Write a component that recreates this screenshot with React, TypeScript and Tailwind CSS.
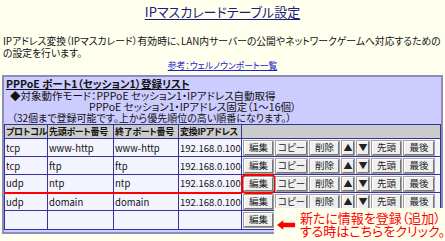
import React from "react";

const rows = [
  { proto: "tcp", start: "www-http", end: "www-http", ip: "192.168.0.100" },
  { proto: "tcp", start: "ftp", end: "ftp", ip: "192.168.0.100" },
  { proto: "udp", start: "ntp", end: "ntp", ip: "192.168.0.100", mark: true },
  { proto: "udp", start: "domain", end: "domain", ip: "192.168.0.100" },
];

function Btn({ children, className = "" }: { children: React.ReactNode; className?: string }) {
  return (
    <button
      className={
        "h-[14px] shrink-0 flex items-center justify-center bg-[#efefef] border border-t-[#ffffff] border-l-[#ffffff] border-r-[#777777] border-b-[#777777] outline outline-1 outline-[#a0a0a0] text-[9.5px] leading-none text-[#222] " +
        className
      }
    >
      {children}
    </button>
  );
}

const cell = "border border-[#333399] px-[1px] py-0 leading-[12px] whitespace-nowrap overflow-hidden";
const head = "border border-[#333399] px-[1px] py-0 leading-[12px] whitespace-nowrap overflow-hidden text-[9px] tracking-[-0.3px]";
const red = "border-b-2 border-b-[#ff0000]";

export default function App() {
  return (
    <div className="relative w-[445px] h-[241px] overflow-hidden bg-[#ffffee] text-[#111] font-['Noto_Sans_CJK_JP',sans-serif] [font-feature-settings:'palt']">
      <h1 className="h-[21px] pt-[4px] text-center text-[13px] leading-[16px] text-[#1a1a80]">
        <span className="underline underline-offset-2">IPマスカレードテーブル設定</span>
      </h1>

      <div className="mt-[14px] h-[24px] px-[3px] text-[9.8px] leading-[12px] whitespace-nowrap">
        <div className="h-[12px]">IPアドレス変換（IPマスカレード）有効時に、LAN内サーバーの公開やネットワークゲームへ対応するための</div>
        <div className="h-[12px]">の設定を行います。</div>
      </div>

      <div className="mt-[1px] h-[12px] text-center text-[8.8px] leading-[12px]">
        <a className="text-[#2222cc] underline">参考：ウェルノウンポート一覧</a>
      </div>

      <div className="mt-[3px] mx-[2px] border-2 border-[#8c8cbc] bg-[#ccccff] pb-[2px]">
        <div className="h-[13px] pt-[1px] pl-[2px] text-[10.5px] leading-[12px] font-bold whitespace-nowrap">
          <span className="underline">PPPoE ポート1（セッション1）登録リスト</span>
        </div>
        <div className="text-[10.5px] leading-[11px] whitespace-nowrap">
          <div className="h-[11px] pl-[6px]">◆対象動作モード：PPPoE セッション1・IPアドレス自動取得</div>
          <div className="h-[11px] pl-[85px]">PPPoE セッション1・IPアドレス固定（1～16個）</div>
          <div className="h-[11px] pl-[8px] text-[10px]">（32個まで登録可能です。上から優先順位の高い順番になります。）</div>
        </div>

        <table className="mt-[1px] w-full table-fixed border-collapse border border-[#333399] text-[9.5px]">
          <colgroup>
            <col className="w-[43px]" />
            <col className="w-[66px]" />
            <col className="w-[65px]" />
            <col className="w-[63px]" />
            <col />
          </colgroup>
          <thead>
            <tr className="h-[14px] bg-[#cccccc] font-bold text-left">
              <th className={head}>プロトコル</th>
              <th className={head}>先頭ポート番号</th>
              <th className={head}>終了ポート番号</th>
              <th className={head}>変換IPアドレス</th>
              <th className="border border-[#333399] p-0"></th>
            </tr>
          </thead>
          <tbody className="bg-[#f4f4ff]">
            {rows.map((r, i) => (
              <tr key={i} className="h-[18px]">
                <td className={cell + (r.mark ? " " + red : "")}>{r.proto}</td>
                <td className={cell + (r.mark ? " " + red : "")}>{r.start}</td>
                <td className={cell + (r.mark ? " " + red : "")}>{r.end}</td>
                <td className={cell + (r.mark ? " " + red : "")}>{r.ip}</td>
                <td className="border border-[#333399] px-[2px] py-0">
                  <div className="flex items-center gap-[3px]">
                    <div className={r.mark ? "rounded-[2px] outline outline-2 outline-offset-1 outline-[#ff0000]" : ""}>
                      <Btn className="w-[29px]">編集</Btn>
                    </div>
                    <Btn className="w-[31px]">コピー</Btn>
                    <Btn className="w-[29px]">削除</Btn>
                    <Btn className="w-[12px] text-[9px]">▲</Btn>
                    <Btn className="w-[12px] text-[9px]">▼</Btn>
                    <Btn className="w-[29px]">先頭</Btn>
                    <Btn className="w-[30px]">最後</Btn>
                  </div>
                </td>
              </tr>
            ))}
            <tr className="h-[19px]">
              <td className={cell}></td>
              <td className={cell}></td>
              <td className={cell}></td>
              <td className={cell}></td>
              <td className="border border-[#333399] px-[2px] py-0">
                <Btn className="w-[29px]">編集</Btn>
              </td>
            </tr>
          </tbody>
        </table>
      </div>

      {/* annotation over the table */}
      <div className="absolute left-[274px] top-[208px] w-[171px] h-[33px] bg-[#ffffee] flex items-center gap-[4px] pl-[3px]">
        <svg width="24" height="12" viewBox="0 0 24 12">
          <polygon points="0,6 8,0 8,3 23,3 23,9 8,9 8,12" fill="#ff0000" />
        </svg>
        <div className="text-[13px] leading-[12.5px] text-[#ff0000] whitespace-nowrap">
          <div>新たに情報を登録（追加）</div>
          <div>する時はこちらをクリック。</div>
        </div>
      </div>
    </div>
  );
}
